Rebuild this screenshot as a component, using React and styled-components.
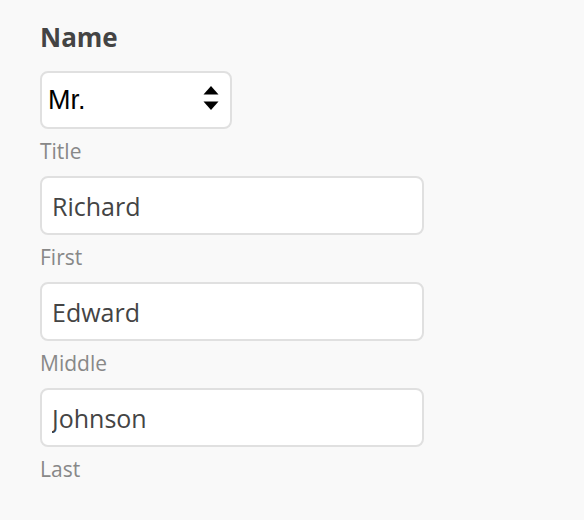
import React from "react";
import styled, { createGlobalStyle } from "styled-components";

const GlobalStyle = createGlobalStyle`
  html, body {
    margin: 0;
    padding: 0;
    background: #f9f9f9;
  }
  body {
    font-family: "Open Sans", "Noto Sans", sans-serif;
  }
`;

const Page = styled.div`
  padding: 22px 0 0 40px;
  min-height: 520px;
  box-sizing: border-box;
`;

const Heading = styled.h2`
  margin: 0 0 18px;
  font-size: 26px;
  line-height: 1.2;
  font-weight: 700;
  color: #444;
`;

const Field = styled.div`
  display: flex;
  flex-direction: column;
  align-items: flex-start;
  margin-bottom: ${p => p.$after || 12}px;
`;

const Label = styled.label`
  margin-top: ${p => p.$before || 10}px;
  font-size: 21px;
  line-height: 25px;
  color: #888;
`;

const SelectWrap = styled.div`
  position: relative;
  width: 192px;
`;

const Select = styled.select`
  appearance: none;
  -webkit-appearance: none;
  width: 100%;
  height: 58px;
  box-sizing: border-box;
  border: 2px solid #e0e0e0;
  border-radius: 8px;
  background: #fff;
  padding: 0 6px;
  font-family: "Liberation Sans", Arial, sans-serif;
  font-size: 27px;
  color: #000;
  outline: none;
`;

const Arrows = styled.svg`
  position: absolute;
  right: 13px;
  top: 14px;
  pointer-events: none;
`;

const Input = styled.input`
  width: 384px;
  height: 59px;
  box-sizing: border-box;
  border: 2px solid #e0e0e0;
  border-radius: 8px;
  background: #fff;
  padding: 0 10px;
  font-family: "Open Sans", sans-serif;
  font-size: 25px;
  color: #444;
  outline: none;
`;

const names = [
  { label: "First", value: "Richard" },
  { label: "Middle", value: "Edward" },
  { label: "Last", value: "Johnson" },
];

export default function App() {
  return (
    <Page>
      <GlobalStyle />
      <Heading>Name</Heading>
      <Field $after={12}>
        <SelectWrap>
          <Select defaultValue="Mr.">
            <option>Mr.</option>
            <option>Mrs.</option>
            <option>Ms.</option>
            <option>Dr.</option>
          </Select>
          <Arrows width="16" height="26" viewBox="0 0 16 26">
            <path d="M8 1 L15.5 9.5 L0.5 9.5 Z" fill="#000" />
            <path d="M0.5 16.5 L15.5 16.5 L8 25 Z" fill="#000" />
          </Arrows>
        </SelectWrap>
        <Label $before={10}>Title</Label>
      </Field>
      {names.map(n => (
        <Field key={n.label}>
          <Input type="text" defaultValue={n.value} />
          <Label>{n.label}</Label>
        </Field>
      ))}
    </Page>
  );
}
